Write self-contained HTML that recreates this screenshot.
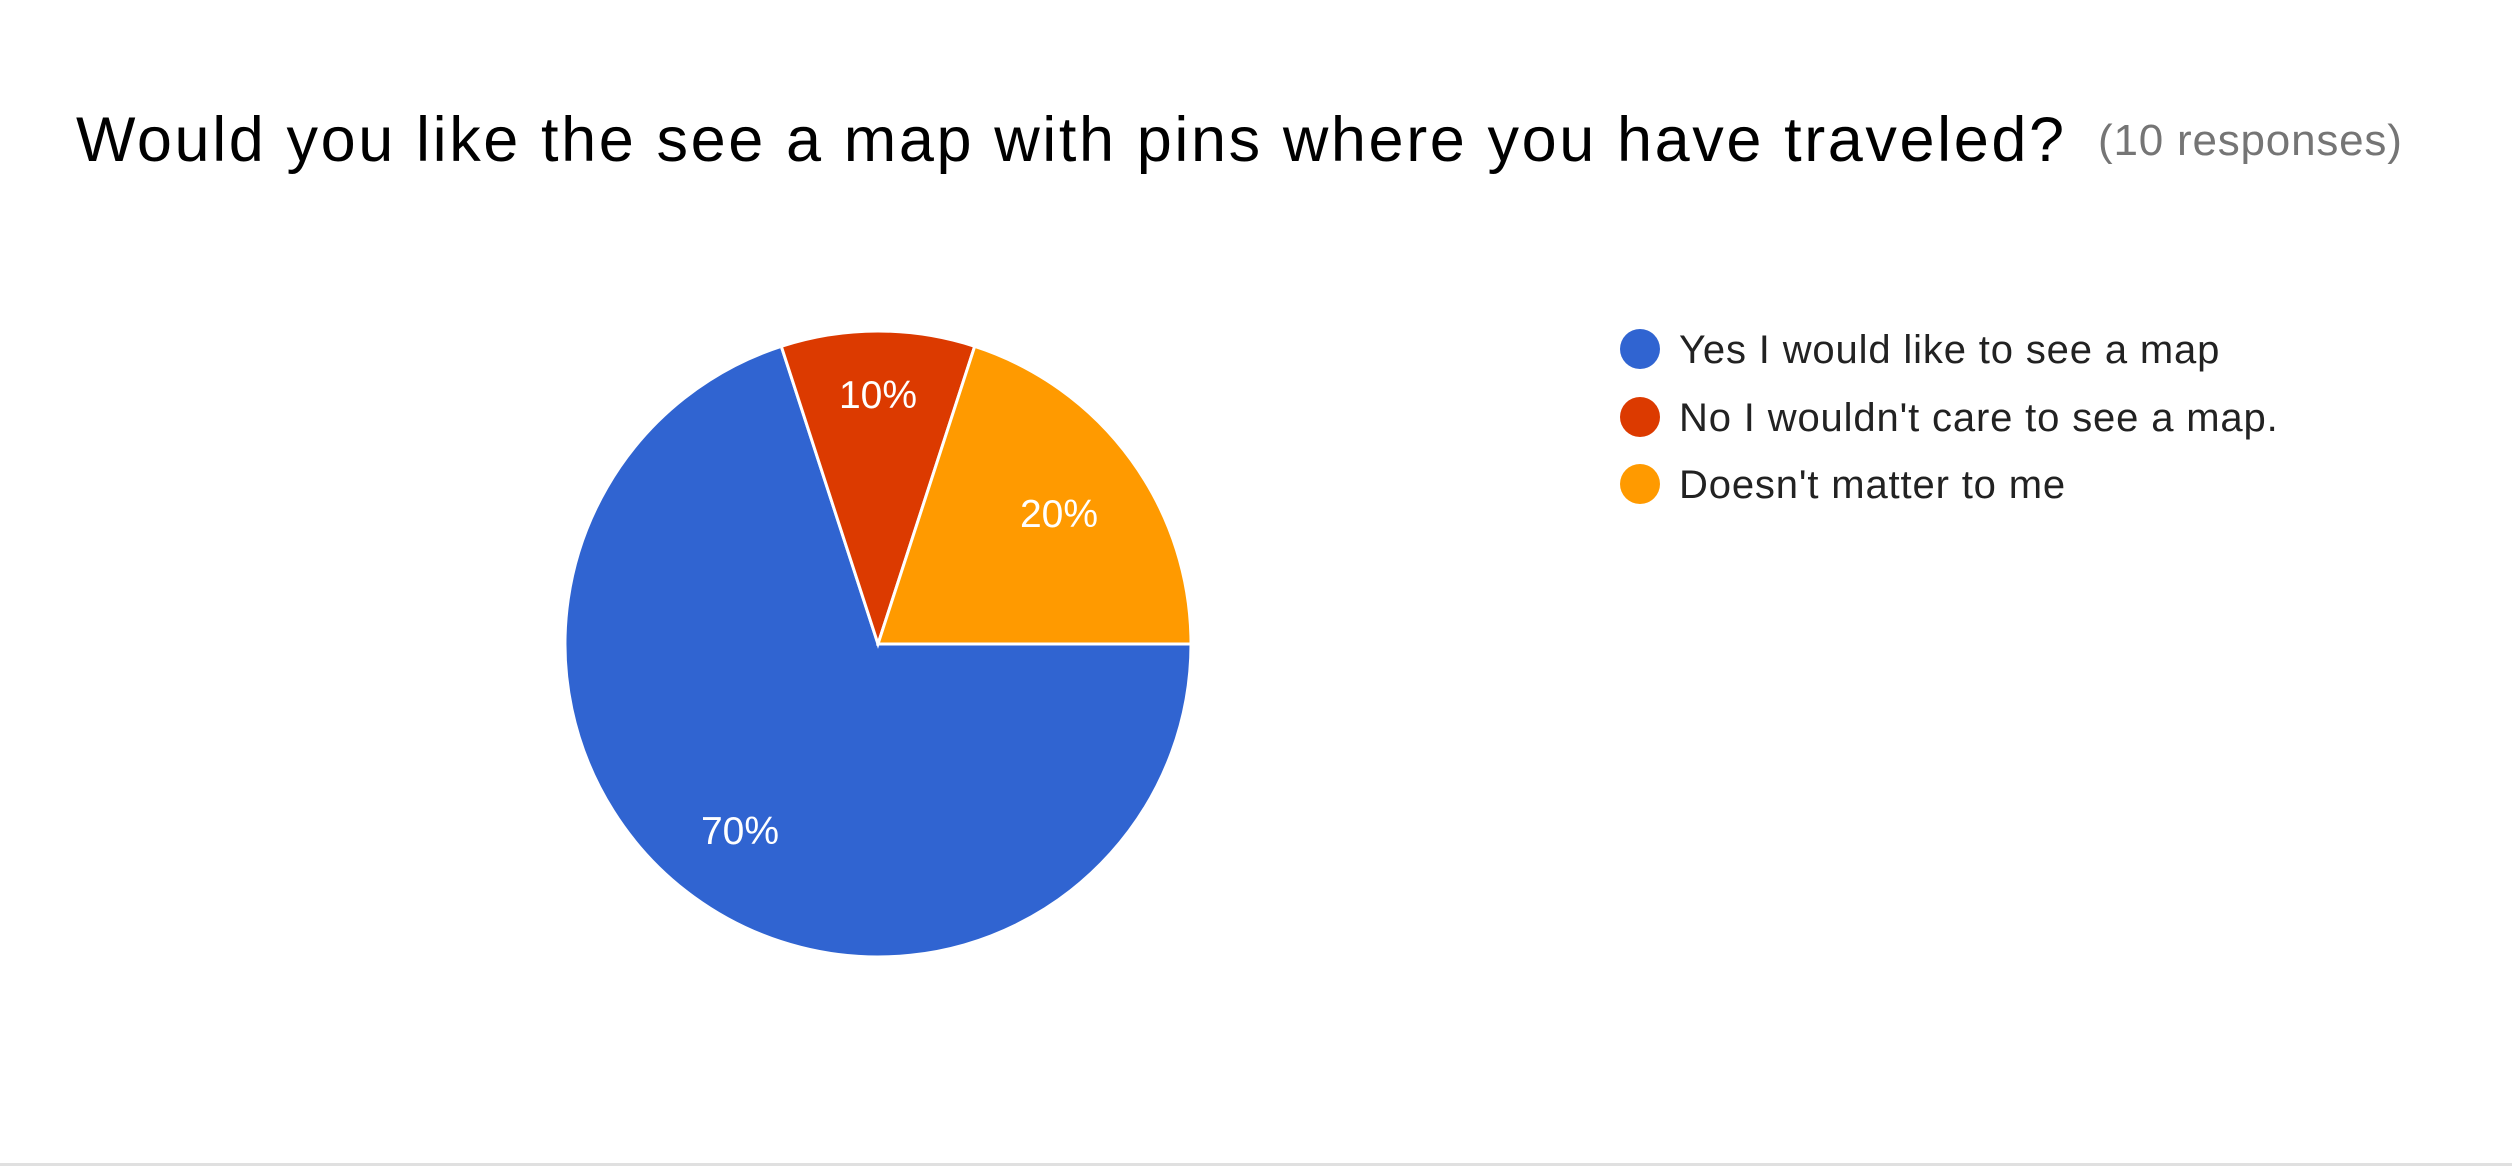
<!DOCTYPE html>
<html><head><meta charset="utf-8"><style>
html,body{margin:0;padding:0;background:#fff;}
body{width:2512px;height:1166px;position:relative;overflow:hidden;font-family:"Liberation Sans",Arial,sans-serif;}
.t{position:absolute;white-space:nowrap;}
</style></head><body>
<div class="t" style="left:76px;top:104px;font-size:63px;letter-spacing:2.6px;color:#000;">Would you like the see a map with pins where you have traveled?</div>
<div class="t" style="left:2098px;top:116px;font-size:44px;letter-spacing:0.8px;color:#757575;">(10 responses)</div>
<svg style="position:absolute;left:0;top:0" width="2512" height="1166">
<g stroke="#fff" stroke-width="3">
<path d="M878 644 L1191 644 A313 313 0 1 1 781.3 346.3 Z" fill="#3064d1"/>
<path d="M878 644 L781.3 346.3 A313 313 0 0 1 974.7 346.3 Z" fill="#dc3a00"/>
<path d="M878 644 L974.7 346.3 A313 313 0 0 1 1191 644 Z" fill="#ff9a00"/>
</g>
<g fill="#fff" font-family="Liberation Sans, Arial, sans-serif" font-size="39" text-anchor="middle">
<text x="878" y="408">10%</text>
<text x="1059" y="527">20%</text>
<text x="740" y="844">70%</text>
</g>
<circle cx="1640" cy="349" r="20" fill="#3064d1"/>
<circle cx="1640" cy="417" r="20" fill="#dc3a00"/>
<circle cx="1640" cy="484" r="20" fill="#ff9a00"/>
<g fill="#222" font-family="Liberation Sans, Arial, sans-serif" font-size="40" letter-spacing="0.85">
<text x="1679" y="363">Yes I would like to see a map</text>
<text x="1679" y="431">No I wouldn't care to see a map.</text>
<text x="1679" y="498">Doesn't matter to me</text>
</g>
<rect x="0" y="1163" width="2512" height="3" fill="#e0e0e0"/>
</svg>
</body></html>
